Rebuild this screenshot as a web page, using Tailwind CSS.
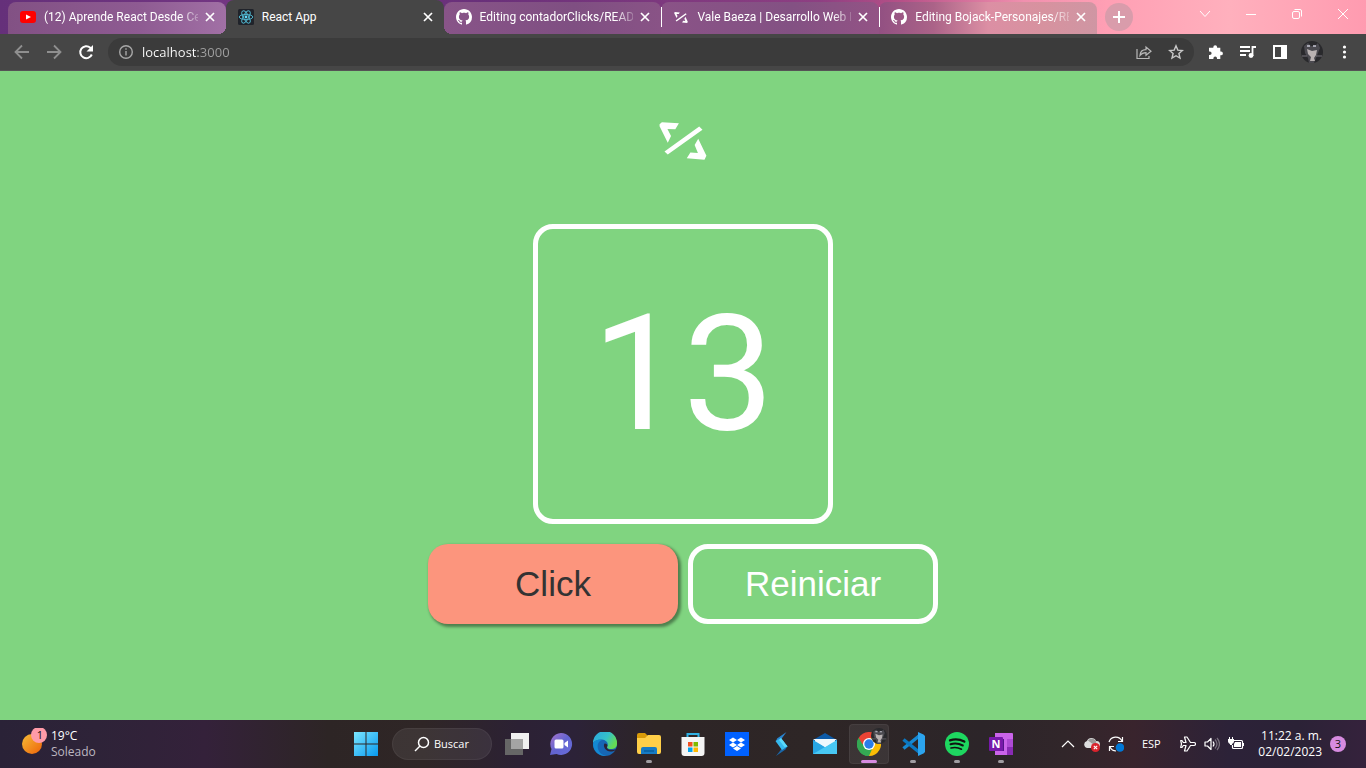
<!DOCTYPE html>
<html lang="es">
<head>
<meta charset="utf-8">
<title>React App</title>
<script src="https://cdn.jsdelivr.net/npm/@tailwindcss/browser@4"></script>
</head>
<body class="min-h-screen flex flex-col bg-[#80d480] font-['Open_Sans','Noto_Sans',sans-serif] text-white">
<svg class="hidden" aria-hidden="true">
  <symbol id="close" viewBox="0 0 16 16"><path d="M4 4l8 8M12 4l-8 8" stroke="#fff" stroke-width="1.7" fill="none"/></symbol>
  <symbol id="github" viewBox="0 0 16 16"><path fill="#fff" d="M8 0C3.58 0 0 3.58 0 8c0 3.54 2.29 6.53 5.47 7.59.4.07.55-.17.55-.38 0-.19-.01-.82-.01-1.49-2.01.37-2.53-.49-2.69-.94-.09-.23-.48-.94-.82-1.13-.28-.15-.68-.52-.01-.53.63-.01 1.08.58 1.23.82.72 1.21 1.87.87 2.33.66.07-.52.28-.87.51-1.07-1.78-.2-3.64-.89-3.64-3.95 0-.87.31-1.59.82-2.15-.08-.2-.36-1.02.08-2.12 0 0 .67-.21 2.2.82.64-.18 1.32-.27 2-.27s1.36.09 2 .27c1.53-1.04 2.2-.82 2.2-.82.44 1.1.16 1.92.08 2.12.51.56.82 1.27.82 2.15 0 3.07-1.87 3.75-3.65 3.95.29.25.54.73.54 1.48 0 1.07-.01 1.93-.01 2.2 0 .21.15.46.55.38A8.01 8.01 0 0016 8c0-4.42-3.58-8-8-8z"/></symbol>
  <symbol id="arrows" viewBox="57 65 145 116"><path fill="#fff" d="M58 72l7-6 52 3-11 18-24-1 11 22-10 20-25-50zM73 155L179 79l10 10L83 164zM176 116l25 52-6 12-54-4 11-18 23 2-10-25z"/></symbol>
  <symbol id="cat" viewBox="0 0 22 22"><circle cx="11" cy="11" r="11" fill="#29292c"/><path d="M3 5l4-3 3 3h4l3-3 2 5-2 5-2 5-2 5H8l-1-5-3-5z" fill="#4b4a50"/><path d="M6 8l5 2 5-1-1 5-2 3 1 3H9l1-4-3-3z" fill="#b9b2b2"/><path d="M6 5h3M12 5h3" stroke="#c8c8d4" stroke-width="1.4"/><path d="M1 15h5M15 15h6" stroke="#77737a"/></symbol>
</svg>

<header>
  <div class="flex h-[34px] pl-2 bg-[linear-gradient(90deg,#65307a_0%,#743683_18%,#69307a_35%,#8e3f82_60%,#b65087_66%,#f090ae_75%,#ff9fb4_81%,#ffb0bd_90%,#ff9bb0_100%)]">
    <div class="flex flex-1 min-w-0 gap-2">
      <nav class="flex flex-1 min-w-0 max-w-[1089px] text-xs font-['Roboto','Open_Sans',sans-serif]" aria-label="Pestañas">
        <div class="flex flex-1 min-w-0 items-center pl-3 pr-2 mt-[2px] pb-[2px] rounded-t-lg bg-[linear-gradient(90deg,#825184,#8e5b92_60%,#a170a5)]">
          <svg class="size-4 shrink-0" viewBox="0 0 16 16"><rect y="2" width="16" height="12" rx="3" fill="#f00"/><path d="M6 5.5v5L11 8z" fill="#fff"/></svg>
          <a href="#" class="ml-2 mr-1 flex-1 min-w-0 overflow-hidden whitespace-nowrap [mask-image:linear-gradient(90deg,#000_88%,transparent_104%)]">(12) Aprende React Desde Cero</a>
          <button class="size-4 shrink-0" aria-label="Cerrar pestaña"><svg class="size-4"><use href="#close"/></svg></button>
        </div>
        <div class="relative flex flex-1 min-w-0 items-center pl-3 pr-2 rounded-t-lg bg-[#464646] before:absolute before:bottom-0 before:-left-2 before:size-2 before:bg-[radial-gradient(circle_at_0_0,transparent_8px,#464646_8px)] after:absolute after:bottom-0 after:-right-2 after:size-2 after:bg-[radial-gradient(circle_at_100%_0,transparent_8px,#464646_8px)]">
          <svg class="size-4 shrink-0" viewBox="0 0 16 16"><rect width="16" height="16" rx="1.5" fill="#20232a"/><g fill="none" stroke="#4fb3cb" stroke-width="1"><ellipse cx="8" cy="8" rx="6.8" ry="2.6"/><ellipse cx="8" cy="8" rx="6.8" ry="2.6" transform="rotate(60 8 8)"/><ellipse cx="8" cy="8" rx="6.8" ry="2.6" transform="rotate(120 8 8)"/></g><circle cx="8" cy="8" r="1.4" fill="#61dafb"/></svg>
          <a href="#" class="ml-2 mr-1 flex-1 min-w-0 overflow-hidden whitespace-nowrap">React App</a>
          <button class="size-4 shrink-0" aria-label="Cerrar pestaña"><svg class="size-4"><use href="#close"/></svg></button>
        </div>
        <div class="flex flex-1 min-w-0 items-center pl-3 pr-2 mt-[2px] pb-[2px] rounded-t-lg bg-[linear-gradient(90deg,#885488,#7f4f82_60%,#895386)]">
          <svg class="size-4 shrink-0"><use href="#github"/></svg>
          <a href="#" class="ml-2 mr-1 flex-1 min-w-0 overflow-hidden whitespace-nowrap [mask-image:linear-gradient(90deg,#000_88%,transparent_104%)]">Editing contadorClicks/README.md</a>
          <button class="size-4 shrink-0" aria-label="Cerrar pestaña"><svg class="size-4"><use href="#close"/></svg></button>
        </div>
        <div class="relative flex flex-1 min-w-0 items-center pl-3 pr-2 mt-[2px] pb-[2px] rounded-t-lg bg-[linear-gradient(90deg,#8a5387,#835183_60%,#935385)] before:absolute before:left-0 before:top-[5px] before:h-5 before:w-px before:bg-white">
          <svg class="h-[11px] w-4 shrink-0"><use href="#arrows"/></svg>
          <a href="#" class="ml-2 mr-1 flex-1 min-w-0 overflow-hidden whitespace-nowrap [mask-image:linear-gradient(90deg,#000_88%,transparent_104%)]">Vale Baeza | Desarrollo Web Frontend</a>
          <button class="size-4 shrink-0" aria-label="Cerrar pestaña"><svg class="size-4"><use href="#close"/></svg></button>
        </div>
        <div class="relative flex flex-1 min-w-0 items-center pl-3 pr-2 mt-[2px] pb-[2px] rounded-t-lg bg-[linear-gradient(90deg,#925082,#ab6388_25%,#dc8fa4_50%,#d7929f_75%,#cf96a3)] before:absolute before:left-0 before:top-[5px] before:h-5 before:w-px before:bg-white">
          <svg class="size-4 shrink-0"><use href="#github"/></svg>
          <a href="#" class="ml-2 mr-1 flex-1 min-w-0 overflow-hidden whitespace-nowrap [mask-image:linear-gradient(90deg,#000_88%,transparent_104%)]">Editing Bojack-Personajes/README.md</a>
          <button class="size-4 shrink-0" aria-label="Cerrar pestaña"><svg class="size-4"><use href="#close"/></svg></button>
        </div>
      </nav>
      <button class="size-7 shrink-0 mt-[3px] rounded-full bg-[#d99cab] flex items-center justify-center" aria-label="Nueva pestaña"><svg class="size-3" viewBox="0 0 12 12"><path d="M6 0v12M0 6h12" stroke="#fff" stroke-width="2"/></svg></button>
    </div>
    <div class="flex h-7 shrink-0">
      <button class="w-[46px] flex items-center justify-center" aria-label="Buscar pestañas"><svg class="size-3" viewBox="0 0 12 12" fill="none" stroke="#fff"><path d="M1 3l5 5.500L11 3"/></svg></button>
      <button class="w-[46px] flex items-center justify-center" aria-label="Minimizar"><svg class="size-3" viewBox="0 0 12 12" fill="none" stroke="#fff"><path d="M1 6.500h10"/></svg></button>
      <button class="w-[46px] flex items-center justify-center" aria-label="Restaurar"><svg class="size-3" viewBox="0 0 12 12" fill="none" stroke="#fff"><rect x="1.500" y="3.500" width="7" height="7" rx="1.500"/><path d="M3.500 1.500H9a1.500 1.500 0 011.500 1.500v5.500"/></svg></button>
      <button class="w-[46px] flex items-center justify-center" aria-label="Cerrar"><svg class="size-3" viewBox="0 0 12 12" fill="none" stroke="#fff"><path d="M1 1l10 10M11 1L1 11"/></svg></button>
    </div>
  </div>

  <div class="flex items-center h-[37px] px-[6px] bg-[#464646] border-b border-[#555355]">
    <button class="size-8 flex items-center justify-center" aria-label="Atrás"><svg class="size-4" viewBox="0 0 16 16" fill="none" stroke="#8f8f8f" stroke-width="1.800"><path d="M15 8H2M8 1.500L1.500 8 8 14.500"/></svg></button>
    <button class="size-8 flex items-center justify-center" aria-label="Adelante"><svg class="size-4" viewBox="0 0 16 16" fill="none" stroke="#8f8f8f" stroke-width="1.800"><path d="M1 8h13M8 1.500L14.500 8 8 14.500"/></svg></button>
    <button class="size-8 flex items-center justify-center" aria-label="Recargar"><svg class="size-4" viewBox="0 0 16 16"><path d="M13.800 10.500A6 6 0 1112.300 3.700L14 5.400" fill="none" stroke="#fff" stroke-width="2"/><path d="M15 1v6.500H8.500z" fill="#fff"/></svg></button>
    <form class="flex flex-1 min-w-0 items-center h-7 mx-[6px] pl-[10px] pr-[2px] rounded-full bg-[#3b3b3b]">
      <svg class="size-4 shrink-0" viewBox="0 0 16 16" fill="none" stroke="#a8a8a8" stroke-width="1.400"><circle cx="8" cy="8" r="6.300"/><path d="M8 7v4.500M8 4.300v1.500"/></svg>
      <input type="text" value="localhost:3000" aria-label="Dirección" class="ml-2 flex-1 min-w-0 text-[13px] leading-5 outline-none text-transparent bg-clip-text bg-[linear-gradient(90deg,#fff_56px,#a0a0a0_56px)]">
      <button type="button" class="size-8 flex items-center justify-center" aria-label="Compartir"><svg class="size-4" viewBox="0 0 16 16" fill="none" stroke="#b8b8b8" stroke-width="1.200"><path d="M1 5v9.500h12V12"/><path d="M4 11.500c.3-4 2.500-5.800 6-5.800V3L15 7.300 10 11.200V8.700c-2.800 0-4.500.8-6 2.800z"/></svg></button>
      <button type="button" class="size-8 flex items-center justify-center" aria-label="Añadir a marcadores"><svg class="size-4" viewBox="0 0 16 16" fill="none" stroke="#c8c8c8" stroke-width="1.400"><path d="M8 1.800l1.800 4.300 4.600.4-3.500 3 1.100 4.600L8 11.700l-4 2.400 1.100-4.600-3.500-3 4.600-.4z"/></svg></button>
    </form>
    <button class="size-8 flex items-center justify-center" aria-label="Extensiones"><svg class="size-4" viewBox="0 0 16 16"><path fill="#fff" d="M1 3.800h4.300v-.6a1.900 1.900 0 013.800 0v.6h3.200v3.700h.7a1.900 1.900 0 010 3.800h-.7V15H9v-.8a1.800 1.800 0 00-3.600 0v.8H1v-4h.8a1.800 1.800 0 000-3.600H1z"/></svg></button>
    <button class="size-8 flex items-center justify-center" aria-label="Control multimedia"><svg class="size-4" viewBox="0 0 16 16"><path d="M0 3h10M0 7h10M0 11h6M12.500 12V3H16" fill="none" stroke="#fff" stroke-width="1.800"/><circle cx="11" cy="11.500" r="2.400" fill="#fff"/></svg></button>
    <button class="size-8 flex items-center justify-center" aria-label="Panel lateral"><svg class="size-4" viewBox="0 0 16 16"><path fill="#fff" fill-rule="evenodd" d="M1 1h14v14H1zm2 2v10h6V3z"/></svg></button>
    <button class="size-8 flex items-center justify-center" aria-label="Perfil"><svg class="size-[22px]"><use href="#cat"/></svg></button>
    <button class="size-8 flex items-center justify-center" aria-label="Menú"><svg class="size-4" viewBox="0 0 16 16" fill="#fff"><circle cx="8.500" cy="3" r="1.600"/><circle cx="8.500" cy="8" r="1.600"/><circle cx="8.500" cy="13" r="1.600"/></svg></button>
  </div>
</header>

<main class="flex flex-1 flex-col items-center pt-[51px] px-4 font-['Liberation_Sans',Arial,sans-serif]">
  <svg class="w-12 h-[38px]" role="img" aria-label="Logo"><use href="#arrows"/></svg>
  <output class="mt-16 size-[300px] flex items-center justify-center rounded-[20px] border-5 border-white font-['Roboto','Liberation_Sans',sans-serif] text-[162px] leading-none">13</output>
  <div class="mt-5 flex flex-wrap justify-center gap-[10px] text-[35px]">
    <button class="w-[250px] h-20 rounded-[20px] bg-[#fc957d] text-[#333] shadow-[2px_2px_3px_1px_rgba(0,0,0,0.4)]">Click</button>
    <button class="w-[250px] h-20 rounded-[20px] border-5 border-white">Reiniciar</button>
  </div>
</main>

<footer class="grid grid-cols-[1fr_auto_1fr] h-12 text-xs bg-[linear-gradient(90deg,#2a2237_0%,#2e2338_7%,#34213a_15%,#2d2525_24%,#2f2626_31%,#2c2134_38%,#2c2238_42%,#2d2526_48%,#2e2626_60%,#2c2529_72%,#31262a_78%,#39242d_83%,#2c2238_90%,#2b2236_95%,#35223c_100%)]">
  <button class="flex items-center pl-[22px] text-left">
    <svg class="w-[25px] h-8" viewBox="0 0 25 32"><defs><linearGradient id="sun" x1="0" y1="0" x2="1" y2="1"><stop stop-color="#f7bd37"/><stop offset="1" stop-color="#ed6209"/></linearGradient></defs><circle cx="10" cy="16" r="10" fill="url(#sun)"/><circle cx="17" cy="7" r="8" fill="#ff9ba8"/><text x="18" y="11" text-anchor="middle" font-size="11" fill="#111">1</text></svg>
    <span class="ml-1 flex flex-col"><span>19°C</span><span class="text-[#bcb6c0]">Soleado</span></span>
  </button>

  <nav class="flex items-center" aria-label="Barra de tareas">
    <button class="w-11 flex justify-center" aria-label="Inicio"><svg class="size-6" viewBox="0 0 24 24"><defs><linearGradient id="win" x1="0" y1="0" x2="1" y2="1"><stop stop-color="#7be6ff"/><stop offset="1" stop-color="#0799ef"/></linearGradient></defs><path fill="url(#win)" d="M0 0h11.500v11.500H0zM12.500 0H24v11.500H12.500zM0 12.500h11.500V24H0zM12.500 12.500H24V24H12.500z"/></svg></button>
    <button class="w-[100px] h-8 ml-1 mr-[3px] rounded-full bg-white/7 border border-white/5 flex items-center justify-center gap-1"><svg class="size-4" viewBox="0 0 16 16" fill="none" stroke="#fff" stroke-width="1.500"><circle cx="9.500" cy="6.500" r="5"/><path d="M6 10l-5 5"/></svg><span class="text-[11px]">Buscar</span></button>
    <button class="w-11 flex justify-center" aria-label="Vista de tareas"><svg class="size-6" viewBox="0 0 24 24"><path fill="#f0f0f0" d="M6 1h18v16H6z"/><path fill="#666" d="M0 7h18v16H0z"/><path fill="#a4a4a4" d="M6 7h12v10H6z"/></svg></button>
    <button class="w-11 flex justify-center" aria-label="Chat"><svg class="size-6" viewBox="0 0 24 24"><defs><linearGradient id="chat" x1="0" y1="0" x2="1" y2="1"><stop stop-color="#a874ca"/><stop offset=".5" stop-color="#6264d0"/><stop offset="1" stop-color="#686ddc"/></linearGradient></defs><path fill="url(#chat)" d="M12 1a11 11 0 11-4.500 21L1 23l1.500-6A11 11 0 0112 1z"/><rect x="5.500" y="7.500" width="9" height="9" rx="1.500" fill="#fff"/><path d="M15.500 11l3.500-2.500v7L15.500 13z" fill="#fff"/></svg></button>
    <button class="w-11 flex justify-center" aria-label="Edge"><svg class="size-6" viewBox="0 0 24 24"><defs><linearGradient id="edge1" x1="0" y1="0" x2="1" y2=".5"><stop stop-color="#2aa6e0"/><stop offset=".6" stop-color="#35c1c9"/><stop offset="1" stop-color="#65dc55"/></linearGradient></defs><circle cx="12" cy="12" r="12" fill="#1767b5"/><path fill="url(#edge1)" d="M0 11A12 12 0 0124 11c.3 4-2.500 6-6 6-3 0-4.500-1.200-3.700-2.500C16 11.500 13.500 8 9 7.500 5 7.200 1.500 8.500 0 11z"/><path fill="#1489d3" d="M0 12c1-4 5-5 9-4-4 1.500-5 5-4 9 1 3.500 4 6 8 7C6 24.500 0 19 0 12z"/><path fill="#2c2336" d="M11.500 11.500c-2 3 1.500 8 6 8 2 0 3.500-.5 5-1.500l.5-1c-1.700.800-3.300 1-5 .8-3-.2-4.700-1.500-3.800-3.300.8-1.200-.2-3-2.700-3z"/></svg></button>
    <button class="relative w-11 h-12 flex items-center justify-center" aria-label="Explorador de archivos"><svg class="size-6" viewBox="0 0 24 24"><path fill="#d99b09" d="M0 3a2 2 0 012-2h6l3 3-3 4H0z"/><path fill="#ffcf48" d="M0 6h8l3-3h11a2 2 0 012 2v15a2 2 0 01-2 2H2a2 2 0 01-2-2z"/><path fill="#167bc4" d="M4 22v-5a2 2 0 012-2h12a2 2 0 012 2v5z"/><path d="M7 19h10" stroke="#075e9e" stroke-width="1.500"/></svg><span class="absolute bottom-[5px] w-[6px] h-[3px] rounded-full bg-[#a09da2]"></span></button>
    <button class="w-11 flex justify-center" aria-label="Microsoft Store"><svg class="size-6" viewBox="0 0 24 24"><path d="M6.500 6V2h11v4" fill="none" stroke="#2fb1e4" stroke-width="2"/><path fill="#f4f4f4" d="M.5 5h23v16a3 3 0 01-3 3h-17a3 3 0 01-3-3z"/><path fill="#f25022" d="M7 10h4.500v4.500H7z"/><path fill="#7fba00" d="M12.500 10H17v4.500h-4.500z"/><path fill="#00a4ef" d="M7 15.500h4.500V20H7z"/><path fill="#ffb900" d="M12.500 15.500H17V20h-4.500z"/></svg></button>
    <button class="w-11 flex justify-center" aria-label="Dropbox"><svg class="size-6" viewBox="0 0 24 24"><path fill="#0061ff" d="M0 0h24v24H0z"/><path fill="#fff" d="M8 5.500l4 2.500-4 2.500L4 8zM16 5.500L20 8l-4 2.500L12 8zM8 10.500l4 2.500-4 2.500L4 13zM16 10.500l4 2.500-4 2.500-4-2.500zM12 14l4 2.500-4 2.500-4-2.500z"/></svg></button>
    <button class="w-11 flex justify-center" aria-label="Streamlabs"><svg class="size-6" viewBox="0 0 24 24"><path fill="#2a83cf" d="M17.500 0L8 6.500 7 9.500l4 4 1-6z"/><path fill="#1a67a8" d="M7 24l9.500-6.500 2-3.500-4-3-2 6z"/><path fill="#36b9ed" d="M6.500 9L12 6l6.500 8.500-5.500 3.500z"/><path fill="#5ad9fa" d="M12 6l6.500 8.500-3 .5-5.500-7z"/></svg></button>
    <button class="w-11 flex justify-center" aria-label="Correo"><svg class="size-6" viewBox="0 0 24 24"><path fill="#0d5ba8" d="M0 8l12-7 12 7v4H0z"/><path fill="#e9f5fc" d="M2 7h20v8H2z"/><path fill="#27a6e4" d="M0 8l24 14H0z"/><path fill="#48c8f4" d="M24 8v14H0z"/><path fill="#eef8fd" d="M0 7h24L12 15z"/></svg></button>
    <button class="relative w-11 h-12 flex items-center justify-center" aria-label="Chrome"><span class="absolute inset-x-[2px] top-1 h-10 rounded bg-white/7 border border-white/5"></span>
      <svg class="relative size-6" viewBox="0 0 24 24"><path fill="#ea4335" d="M12 12L1.600 6A12 12 0 0122.400 6z"/><path fill="#fbbc04" d="M12 12l10.400-6A12 12 0 0112 24z"/><path fill="#34a853" d="M12 12v12A12 12 0 011.600 6z"/><path fill="#ea4335" d="M1.600 6H12v6H5z"/><path fill="#fbbc04" d="M12 6h10.400L17 15l-5 9z"/><path fill="#34a853" d="M1.600 6L7 15l9 0-4 9A12 12 0 011.600 6z"/><circle cx="12" cy="12" r="6" fill="#fff"/><circle cx="12" cy="12" r="4.700" fill="#2b7de9"/></svg>
      <svg class="absolute right-[4px] top-[8px] size-4"><use href="#cat"/></svg>
      <span class="absolute bottom-[5px] w-4 h-[3px] rounded-full bg-[#d78be0]"></span></button>
    <button class="relative w-11 h-12 flex items-center justify-center" aria-label="Visual Studio Code"><svg class="size-6" viewBox="0 0 24 24"><path fill="none" stroke="#1689d3" stroke-width="3.500" stroke-linejoin="round" d="M18 4L2.500 16.500"/><path fill="none" stroke="#0b78c2" stroke-width="3.500" d="M18 20L2.500 7.500"/><path fill="#2ca4ee" d="M17 0l5.500 2.500L24 4v16l-1.500 1.500L17 24z"/></svg><span class="absolute bottom-[5px] w-[6px] h-[3px] rounded-full bg-[#a09da2]"></span></button>
    <button class="relative w-11 h-12 flex items-center justify-center" aria-label="Spotify"><svg class="size-6" viewBox="0 0 24 24"><circle cx="12" cy="12" r="12" fill="#1ed760"/><path fill="none" stroke="#111" stroke-linecap="round" stroke-width="2.300" d="M5 8.300c5-1.500 10-1 14.300 1.300"/><path fill="none" stroke="#111" stroke-linecap="round" stroke-width="2" d="M5.500 12.300c4.500-1.300 8.500-.8 12.300 1.200"/><path fill="none" stroke="#111" stroke-linecap="round" stroke-width="1.600" d="M6 16c4-1 7.300-.5 10.500 1.200"/></svg><span class="absolute bottom-[5px] w-[6px] h-[3px] rounded-full bg-[#a09da2]"></span></button>
    <button class="relative w-11 h-12 flex items-center justify-center" aria-label="OneNote"><svg class="size-6" viewBox="0 0 24 24"><path fill="#ca64ea" d="M6 1h17a1 1 0 011 1v21H6z"/><path fill="#ae4bd5" d="M18 7h6v8h-6z"/><path fill="#8a2bb5" d="M18 15h6v8h-6z"/><path fill="#53158a" d="M6 7h9v12H6z"/><rect y="5" width="14" height="14" rx="1" fill="#7719aa"/><text x="7" y="16" text-anchor="middle" font-size="11" font-weight="700" fill="#fff">N</text></svg><span class="absolute bottom-[5px] w-[6px] h-[3px] rounded-full bg-[#a09da2]"></span></button>
  </nav>

  <div class="flex items-center justify-end pr-5">
    <button class="w-6 flex justify-center" aria-label="Iconos ocultos"><svg class="size-4" viewBox="0 0 16 16" fill="none" stroke="#fff" stroke-width="1.200"><path d="M2 11l6-6 6 6"/></svg></button>
    <button class="w-6 flex justify-center" aria-label="OneDrive"><svg class="size-4" viewBox="0 0 16 16"><path fill="#dedede" d="M3.500 12a3.500 3.500 0 01-.6-6.900A5 5 0 0112 5a3.500 3.500 0 011 7z"/><path fill="#999" d="M4 4.500A5 5 0 0112.500 6L10 9z"/><circle cx="11.500" cy="11.500" r="4.500" fill="#d8222c"/><path d="M9.800 9.800l3.400 3.400M13.200 9.800l-3.400 3.400" stroke="#fff" stroke-width="1.100"/></svg></button>
    <button class="w-6 flex justify-center" aria-label="Windows Update"><svg class="size-4" viewBox="0 0 16 16" fill="none" stroke="#fff" stroke-width="1.200"><path d="M1 6a7 7 0 0113-1M14.500 1v4.500H10M1.500 15v-4.500H6M2 11a7 7 0 006 4"/><circle cx="12" cy="11.500" r="4.300" fill="#0078d7" stroke="none"/></svg></button>
    <button class="w-[46px] text-center text-[11px]">ESP</button>
    <button class="flex items-center mx-[6px] gap-2" aria-label="Red, volumen y batería">
      <svg class="size-4" viewBox="0 0 16 16" fill="none" stroke="#fff" stroke-width="1.200" stroke-linejoin="round"><path d="M6 6.500L4.500 1H7l3.500 5.500h3.500a1.500 1.500 0 010 3h-3.500L7 15H4.500L6 9.500H3.300L2 11.500H.7L1.500 8 .7 4.500H2l1.300 2z"/></svg>
      <svg class="size-4" viewBox="0 0 16 16" fill="none" stroke="#fff" stroke-width="1.200"><path d="M1 6h2.500L7 2.500v11L3.500 10H1z" stroke-linejoin="round"/><path d="M9 5.500q2 2.500 0 5"/><path d="M11 3.500q4 4.500 0 9M13 2q5 6 0 12" stroke="#78707d"/></svg>
      <svg class="size-4" viewBox="0 0 16 16"><path d="M6 4.500h7.500a1 1 0 011 1v6a1 1 0 01-1 1h-8a1 1 0 01-1-1V9" fill="none" stroke="#fff" stroke-width="1.200"/><path fill="#fff" d="M7 6h6v5H6V8zM14.500 7H16v3h-1.500zM0 3h6v2.500a3 3 0 01-2 2.500v1H2V8A3 3 0 010 5.500zM1 1h1v2H1zM4 1h1v2H4z"/></svg>
    </button>
    <button class="ml-2 mr-2 text-right whitespace-nowrap"><time class="block">11:22 a. m.</time><time class="block">02/02/2023</time></button>
    <button class="size-4 rounded-full bg-[#d78be0] text-[#111] text-center text-[11px] leading-4" aria-label="3 notificaciones">3</button>
  </div>
</footer>
</body>
</html>
